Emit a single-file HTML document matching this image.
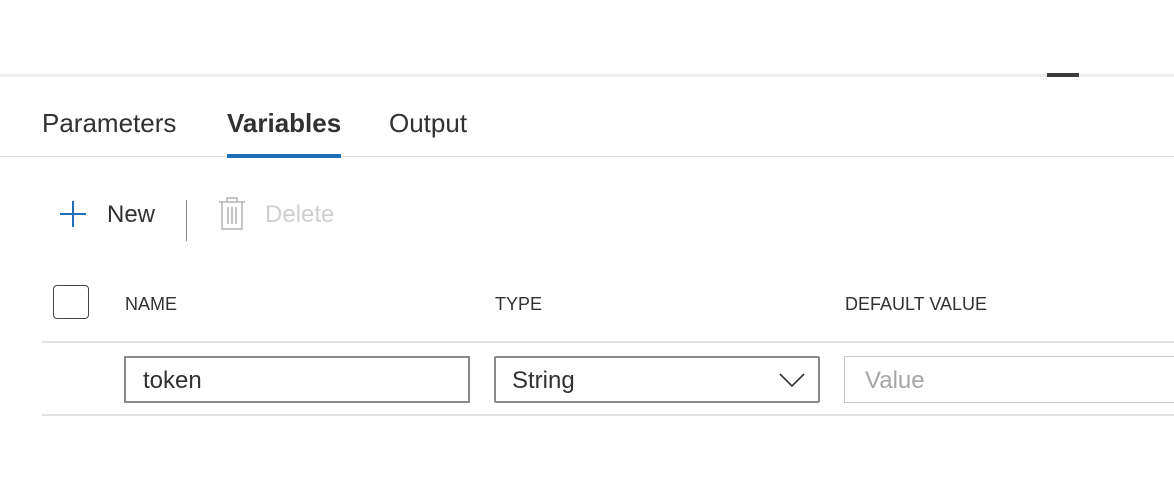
<!DOCTYPE html>
<html><head><style>
body{margin:0;width:1174px;height:491px;background:#fff;position:relative;overflow:hidden;font-family:"Segoe UI","Liberation Sans",sans-serif;color:#323130}
.a{position:absolute}
</style></head><body>
<div class="a" style="left:0;top:74px;width:1174px;height:3px;background:#ececec"></div>
<div class="a" style="left:1047px;top:73px;width:32px;height:4px;background:#3b3b3b"></div>
<div class="a" style="left:42px;top:108px;font-size:26px;color:#323130">Parameters</div>
<div class="a" style="left:227px;top:108px;font-size:26px;font-weight:bold;color:#323130">Variables</div>
<div class="a" style="left:389px;top:108px;font-size:26px;color:#323130">Output</div>
<div class="a" style="left:0;top:156px;width:1174px;height:1px;background:#dcdcdc"></div>
<div class="a" style="left:227px;top:154px;width:114px;height:4px;background:#1f6fb8"></div>
<svg class="a" style="left:58px;top:199px" width="30" height="30"><path d="M15 2V28M2 15H28" stroke="#1f6fb8" stroke-width="2"/></svg>
<div class="a" style="left:107px;top:201px;font-size:24px;color:#323130">New</div>
<div class="a" style="left:186px;top:200px;width:1px;height:41px;background:#8a8a8a"></div>
<svg class="a" style="left:218px;top:197px" width="28" height="34"><g fill="none" stroke="#b3b3b3" stroke-width="1.5"><path d="M1 5H27M9 5V1H19V5M4 5V32H24V5M10 10V27M14 10V27M18 10V27"/></g></svg>
<div class="a" style="left:265px;top:201px;font-size:24px;color:#cfcfcf">Delete</div>
<div class="a" style="left:53px;top:285px;width:34px;height:32px;border:1.5px solid #444;border-radius:4px"></div>
<div class="a" style="left:125px;top:294px;font-size:18px;color:#323130">NAME</div>
<div class="a" style="left:495px;top:294px;font-size:18px;color:#323130">TYPE</div>
<div class="a" style="left:845px;top:294px;font-size:18px;color:#323130">DEFAULT VALUE</div>
<div class="a" style="left:42px;top:341px;width:1132px;height:2px;background:#e1e1e1"></div>
<div class="a" style="left:124px;top:356px;width:342px;height:43px;border:2px solid #8a8a8a;box-sizing:content-box"></div>
<div class="a" style="left:143px;top:367px;font-size:24px">token</div>
<div class="a" style="left:494px;top:356px;width:322px;height:43px;border:2px solid #8a8a8a;border-radius:2px"></div>
<div class="a" style="left:512px;top:367px;font-size:24px">String</div>
<svg class="a" style="left:779px;top:372px" width="26" height="16"><path d="M1 2L13 14L25 2" fill="none" stroke="#333" stroke-width="1.6"/></svg>
<div class="a" style="left:844px;top:356px;width:340px;height:45px;border:1px solid #c8c8c8"></div>
<div class="a" style="left:865px;top:367px;font-size:24px;color:#a6a6a6">Value</div>
<div class="a" style="left:42px;top:414px;width:1132px;height:2px;background:#e1e1e1"></div>
</body></html>
